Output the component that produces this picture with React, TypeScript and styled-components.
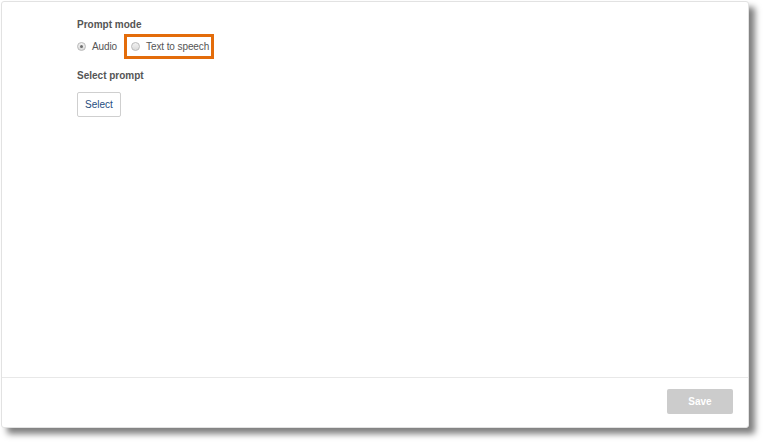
import React, { useState } from "react";
import styled, { createGlobalStyle } from "styled-components";

const GlobalStyle = createGlobalStyle`
  html, body {
    margin: 0;
    padding: 0;
    background: #ffffff;
    font-family: "Liberation Sans", Arial, sans-serif;
  }
`;

const Page = styled.div`
  width: 764px;
  height: 443px;
  padding: 1px 0 0 1px;
  box-sizing: border-box;
`;

const Panel = styled.div`
  width: 748px;
  height: 427px;
  box-sizing: border-box;
  background: #ffffff;
  border: 1px solid #e2e2e2;
  border-radius: 3px;
  box-shadow: 6px 6px 6px rgba(0, 0, 0, 0.5);
  display: flex;
  flex-direction: column;
`;

const Content = styled.div`
  flex: 1;
  padding: 16px 0 0 75px;
  display: flex;
  flex-direction: column;
  align-items: flex-start;
`;

const Label = styled.div<{ $gap?: number }>`
  font-size: 10px;
  line-height: 14px;
  font-weight: bold;
  color: #555555;
  margin-top: ${(p) => p.$gap ?? 0}px;
`;

const RadioRow = styled.div`
  display: flex;
  align-items: center;
  margin-top: 2px;
  gap: 7px;
`;

const Option = styled.label<{ $marked?: boolean }>`
  display: flex;
  align-items: center;
  gap: 6px;
  height: 25px;
  box-sizing: border-box;
  font-size: 10px;
  letter-spacing: -0.1px;
  color: #555555;
  cursor: pointer;
  padding: ${(p) => (p.$marked ? "0 2px 0 4px" : "0")};
  border: ${(p) => (p.$marked ? "3px solid #e36c0a" : "none")};
`;

const Dot = styled.span<{ $on?: boolean }>`
  width: 9px;
  height: 9px;
  box-sizing: border-box;
  border-radius: 50%;
  border: 1px solid #b9b9b9;
  background: linear-gradient(#f2f2f2, #dadada);
  display: flex;
  align-items: center;
  justify-content: center;

  &::after {
    content: "";
    width: 3px;
    height: 3px;
    border-radius: 50%;
    background: #6f6f6f;
    display: ${(p) => (p.$on ? "block" : "none")};
  }
`;

const SelectButton = styled.button`
  margin-top: 9px;
  width: 44px;
  height: 25px;
  background: #ffffff;
  border: 1px solid #cfcfcf;
  border-radius: 2px;
  font-family: inherit;
  font-size: 10px;
  color: #1e4d80;
  padding: 0;
  cursor: pointer;
`;

const Footer = styled.div`
  height: 50px;
  border-top: 1px solid #e8e8e8;
  box-sizing: border-box;
  display: flex;
  justify-content: flex-end;
  align-items: flex-start;
  padding: 11px 15px 0 0;
`;

const SaveButton = styled.button`
  width: 66px;
  height: 25px;
  background: #cccccc;
  border: none;
  border-radius: 2px;
  color: #ffffff;
  font-family: inherit;
  font-size: 10px;
  font-weight: bold;
  padding: 0;
`;

const App: React.FC = () => {
  const [mode, setMode] = useState<"audio" | "tts">("audio");

  return (
    <Page>
      <GlobalStyle />
      <Panel>
        <Content>
          <Label>Prompt mode</Label>
          <RadioRow>
            <Option onClick={() => setMode("audio")}>
              <Dot $on={mode === "audio"} />
              Audio
            </Option>
            <Option $marked onClick={() => setMode("tts")}>
              <Dot $on={mode === "tts"} />
              Text to speech
            </Option>
          </RadioRow>
          <Label $gap={10}>Select prompt</Label>
          <SelectButton>Select</SelectButton>
        </Content>
        <Footer>
          <SaveButton disabled>Save</SaveButton>
        </Footer>
      </Panel>
    </Page>
  );
};

export default App;
